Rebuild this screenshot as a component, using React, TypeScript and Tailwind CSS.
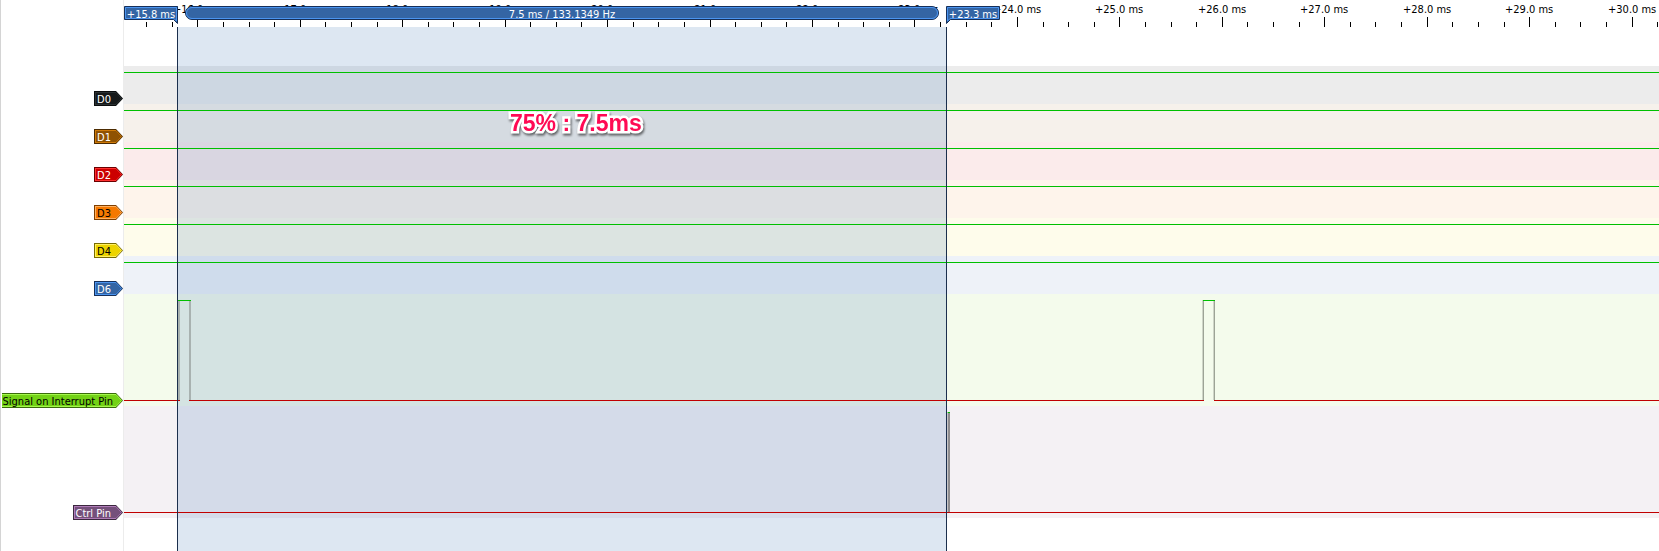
import { useEffect, useState, type ReactNode } from "react";

type Channel = {
  name: string;
  band: string;
  flag: string;
  highlight: string;
  tip: string;
  edge: string;
  tall?: boolean;
  trace: ReactNode;
};

const HIGH = "#00c000";
const LOW = "#c00000";

const idle = <rect y="6" width="100%" height="1" fill={HIGH} />;

const interruptTrace = (
  <>
    <rect x="0" y="106" width="56" height="1" fill={LOW} />
    <rect x="54" y="7" width="2" height="99" fill="#a8b2b0" />
    <rect x="54" y="6" width="13" height="1" fill={HIGH} />
    <rect x="65" y="7" width="2" height="99" fill="#a8b2b0" />
    <rect x="65" y="106" width="1015" height="1" fill={LOW} />
    <rect x="1078" y="6" width="1" height="100" fill="#cfd5c8" />
    <rect x="1079" y="6" width="1" height="100" fill="#9da396" />
    <rect x="1089" y="6" width="1" height="100" fill="#cfd5c8" />
    <rect x="1090" y="6" width="1" height="100" fill="#9da396" />
    <rect x="1079" y="6" width="12" height="1" fill={HIGH} />
    <rect x="1090" y="106" width="100%" height="1" fill={LOW} />
  </>
);

const controlTrace = (
  <>
    <rect x="823" y="7" width="1" height="99" fill="#c8c6c8" />
    <rect x="824" y="7" width="2" height="99" fill="#8f8d8f" />
    <rect x="823" y="6" width="1" height="1" fill="#90dc90" />
    <rect x="824" y="6" width="2" height="1" fill={HIGH} />
    <rect y="106" width="100%" height="1" fill={LOW} />
  </>
);

const channels: Channel[] = [
  { name: "D0", band: "bg-[#ececec]", flag: "bg-[#16191a] border-[#0a0c0d] text-white", highlight: "border-[#2a3032]", tip: "fill-[#16191a] stroke-[#2a3032]", edge: "fill-[#0a0c0d]", trace: idle },
  { name: "D1", band: "bg-[#f6f1eb]", flag: "bg-[#8f5202] border-[#4c2b01] text-white", highlight: "border-[#cf7a08]", tip: "fill-[#8f5202] stroke-[#cf7a08]", edge: "fill-[#4c2b01]", trace: idle },
  { name: "D2", band: "bg-[#fbebeb]", flag: "bg-[#cc0000] border-[#6b0000] text-white", highlight: "border-[#ff3030]", tip: "fill-[#cc0000] stroke-[#ff3030]", edge: "fill-[#6b0000]", trace: idle },
  { name: "D3", band: "bg-[#fef4eb]", flag: "bg-[#f57900] border-[#7d3e00] text-black", highlight: "border-[#ffb060]", tip: "fill-[#f57900] stroke-[#ffb060]", edge: "fill-[#7d3e00]", trace: idle },
  { name: "D4", band: "bg-[#fefceb]", flag: "bg-[#edd400] border-[#786b00] text-black", highlight: "border-[#fff060]", tip: "fill-[#edd400] stroke-[#fff060]", edge: "fill-[#786b00]", trace: idle },
  { name: "D6", band: "bg-[#eef2f8]", flag: "bg-[#3465a4] border-[#16305a] text-white", highlight: "border-[#4a94f0]", tip: "fill-[#3465a4] stroke-[#4a94f0]", edge: "fill-[#16305a]", trace: idle },
  { name: "Signal on Interrupt Pin", band: "bg-[#f4fbec]", flag: "bg-[#73d216] border-[#3a6b0b] text-black", highlight: "border-[#a4f84c]", tip: "fill-[#73d216] stroke-[#a4f84c]", edge: "fill-[#3a6b0b]", tall: true, trace: interruptTrace },
  { name: "Ctrl Pin", band: "bg-[#f4f1f4]", flag: "bg-[#75507b] border-[#3b283e] text-white", highlight: "border-[#b07cb8]", tip: "fill-[#75507b] stroke-[#b07cb8]", edge: "fill-[#3b283e]", tall: true, trace: controlTrace },
];

function ChannelFlag({ channel }: { channel: Channel }) {
  const long = channel.name.length > 12;
  return (
    <div className="flex h-[15px]">
      <div className={`${long ? "border-y" : "border-y border-l"} ${channel.flag}`}>
        <div className={`flex h-[13px] items-center pt-[2px] leading-[11px] ${long ? "border-y pl-px pr-[3px]" : "border-y border-l pl-px pr-[5px]"} ${channel.highlight}`}>
          {channel.name}
        </div>
      </div>
      <svg className="h-[15px] w-[7px]" viewBox="0 0 7 15" aria-hidden="true">
        <path d="M0 0 L7 7.5 L0 15Z" className={channel.edge} />
        <path d="M-1 1.5 H0 L5.6 7.5 L0 13.5 H-1" className={channel.tip} />
      </svg>
    </div>
  );
}

const FIRST_TICK = 73.28;
const TICK_STEP = 25.613;
const PLOT_LEFT = 124;
const tickX = (i: number) => Math.round(FIRST_TICK + i * TICK_STEP);

function useWindowWidth() {
  const [width, setWidth] = useState(window.innerWidth);
  useEffect(() => {
    const update = () => setWidth(window.innerWidth);
    window.addEventListener("resize", update);
    return () => window.removeEventListener("resize", update);
  }, []);
  return width;
}

function Ruler() {
  const plotWidth = useWindowWidth() - PLOT_LEFT;
  const count = Math.max(0, Math.floor((plotWidth - FIRST_TICK) / TICK_STEP) + 3);
  const ticks = Array.from({ length: count }, (_, i) => i - 2);
  const majors = ticks.filter((i) => i >= 0 && i % 4 === 0);
  return (
    <div className="relative h-[27px]">
      <svg className="absolute inset-0 h-full w-full" shapeRendering="crispEdges" aria-hidden="true">
        {ticks.map((i) => (
          <rect key={i} x={tickX(i)} y={i % 4 === 0 ? 17 : 22} width="1" height={i % 4 === 0 ? 10 : 5} />
        ))}
      </svg>
      {majors.map((i) => (
        <span key={i} className="absolute top-0 -ml-6 w-12 text-center leading-[20px]" style={{ left: tickX(i) }}>
          {`+${16 + i / 4}.0 ms`}
        </span>
      ))}
    </div>
  );
}

function CursorFlag({ label, side }: { label: string; side: "left" | "right" }) {
  return (
    <div className="relative h-[18px] w-[54px] text-white">
      <svg className={side === "left" ? "absolute inset-0" : "absolute inset-0 -scale-x-100"} width="54" height="18" viewBox="0 0 54 18" aria-hidden="true">
        <path d="M0.5 0.5 H53.5 V17.5 L49.5 13.5 H0.5Z" fill="#3465a4" stroke="#16305a" />
        <path d="M1.5 1.5 H52.5 V15 L50 12.5 H1.5Z" fill="none" stroke="#4a94f0" />
      </svg>
      <span className="relative block text-center leading-[18px]">{label}</span>
    </div>
  );
}

export default function App() {
  return (
    <main className="flex min-h-screen overflow-hidden whitespace-nowrap border-l border-[#d4d4d4] bg-white font-['DejaVu_Sans_Condensed','DejaVu_Sans','Noto_Sans',sans-serif] text-[11px] text-black">
      <aside className="flex w-[122px] shrink-0 flex-col pt-[68px]" aria-label="Channels">
        {channels.map((c) => (
          <div key={c.name} className={`flex items-end justify-end ${c.tall ? "h-28" : "h-[38px]"}`}>
            <ChannelFlag channel={c} />
          </div>
        ))}
      </aside>

      <section className="relative min-w-0 flex-1 overflow-hidden border-l border-[#ececec]" aria-label="Timeline">
        <Ruler />
        <div className="pt-[39px]">
          {channels.map((c) => (
            <div key={c.name} className={`${c.band} ${c.tall ? "h-28" : "h-[38px]"}`}>
              <svg className="relative z-20 block h-full w-full" shapeRendering="crispEdges" aria-hidden="true">
                {c.trace}
              </svg>
            </div>
          ))}
        </div>

        <div className="absolute bottom-0 left-[54px] top-[27px] z-10 w-[768px] bg-[#3470b4]/17" />
        <div className="absolute bottom-0 left-[53px] top-[27px] z-30 w-[770px] border-x border-[#1b2f4d]" />

        <div className="absolute left-0 top-[6px] z-30">
          <CursorFlag label="+15.8 ms" side="left" />
        </div>
        <div className="absolute left-[61px] top-[6px] z-30 h-[14px] w-[754px] rounded-full border border-[#16305a] bg-[#3465a4] text-center text-white">
          <div className="h-3 rounded-full border border-[#4a94f0] leading-[14px]">7.5 ms / 133.1349 Hz</div>
        </div>
        <div className="absolute left-[822px] top-[6px] z-30">
          <CursorFlag label="+23.3 ms" side="right" />
        </div>

        <p className="absolute left-[386px] top-[110px] z-30 font-['Liberation_Sans',Arial,sans-serif] text-[23px] font-bold leading-[26px] text-[#ff0a54] [paint-order:stroke_fill] [-webkit-text-stroke:5px_white] [filter:drop-shadow(1px_2px_1px_rgba(0,0,0,0.55))]">
          75% : 7.5ms
        </p>
      </section>
    </main>
  );
}
